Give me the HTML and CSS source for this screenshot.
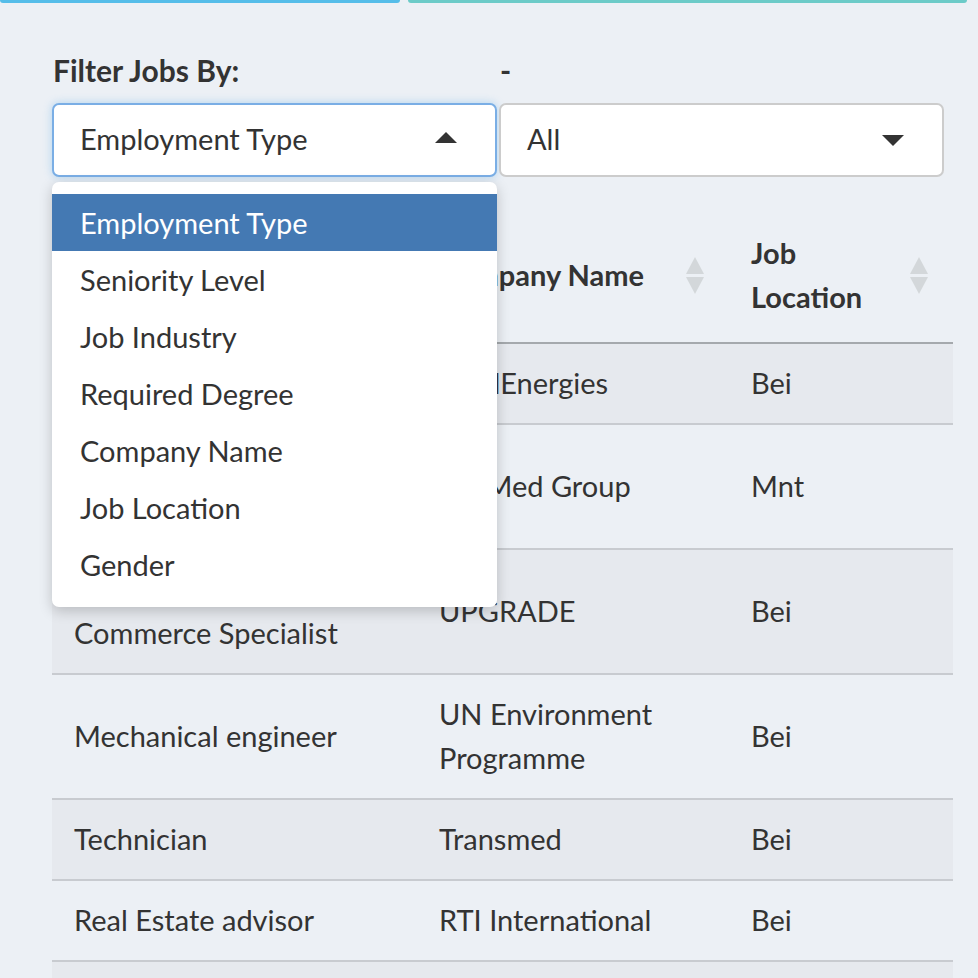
FILE: index.html
```html
<!DOCTYPE html>
<html lang="en">
<head>
<meta charset="utf-8">
<title>Filter Jobs</title>
<link rel="stylesheet" href="styles.css">
</head>
<body>
<div class="topbars">
  <div class="bar bar-blue"></div>
  <div class="bar bar-teal"></div>
</div>
<div class="content">
  <div class="filters">
    <div class="filter">
      <div class="label">Filter Jobs By:</div>
      <div class="select focused">
        <span class="value">Employment Type</span>
        <span class="caret caret-up"></span>
      </div>
      <div class="menu">
        <div class="option active">Employment Type</div>
        <div class="option">Seniority Level</div>
        <div class="option">Job Industry</div>
        <div class="option">Required Degree</div>
        <div class="option">Company Name</div>
        <div class="option">Job Location</div>
        <div class="option">Gender</div>
      </div>
    </div>
    <div class="filter">
      <div class="label">-</div>
      <div class="select">
        <span class="value">All</span>
        <span class="caret caret-down"></span>
      </div>
    </div>
  </div>

  <table class="jobs">
    <colgroup>
      <col class="c1"><col class="c2"><col class="c3">
    </colgroup>
    <thead>
      <tr>
        <th><div class="th"><span>Job Title</span><span class="sort"><i class="up"></i><i class="down"></i></span></div></th>
        <th><div class="th"><span>Company Name</span><span class="sort"><i class="up"></i><i class="down"></i></span></div></th>
        <th><div class="th"><span>Job Location</span><span class="sort"><i class="up"></i><i class="down"></i></span></div></th>
      </tr>
    </thead>
    <tbody>
      <tr class="odd"><td>Project Engineer</td><td>TotalEnergies</td><td>Bei</td></tr>
      <tr><td>Medical Sales Representative</td><td>LifeMed Group</td><td>Mnt</td></tr>
      <tr class="odd"><td>E-<br>Commerce Specialist</td><td>UPGRADE</td><td>Bei</td></tr>
      <tr><td>Mechanical engineer</td><td>UN Environment Programme</td><td>Bei</td></tr>
      <tr class="odd"><td>Technician</td><td>Transmed</td><td>Bei</td></tr>
      <tr><td>Real Estate advisor</td><td>RTI International</td><td>Bei</td></tr>
      <tr class="odd"><td>Accountant</td><td>Bank Audi</td><td>Bei</td></tr>
    </tbody>
  </table>
</div>
</body>
</html>
```
FILE: styles.css
```css
html, body {
  margin: 0;
  padding: 0;
  background: #ecf0f5;
  height: 978px;
  overflow: hidden;
}
body {
  font-family: Lato, "Open Sans", sans-serif;
  color: #333;
  font-size: 29px;
}
.topbars {
  display: flex;
  gap: 8px;
  padding-right: 11px;
}
.bar {
  height: 3px;
  border-radius: 0 0 3px 3px;
}
.bar-blue { width: 400px; background: #55bde9; }
.bar-teal { flex: 1; background: #6ccbc8; }

.content {
  padding: 0 25px 0 52px;
}
.filters {
  display: flex;
  gap: 2px;
  margin-top: 52px;
}
.filter {
  position: relative;
  width: 445px;
}
.label {
  font-weight: 700;
  font-size: 30px;
  line-height: 30px;
  height: 30px;
  margin-bottom: 18px;
  padding-left: 1px;
}
.select {
  box-sizing: border-box;
  height: 74px;
  background: #fff;
  border: 2px solid #ccc;
  border-radius: 7px;
  display: flex;
  align-items: center;
  justify-content: space-between;
  padding: 0 38px 3px 26px;
  font-size: 29px;
}
.select.focused {
  border-color: #7aaee5;
  box-shadow: 0 0 8px rgba(102, 175, 233, 0.45);
}
.caret {
  width: 0;
  height: 0;
  border-left: 11px solid transparent;
  border-right: 11px solid transparent;
}
.caret-up { border-bottom: 11px solid #333; margin-top: -2px; }
.caret-down { border-top: 11px solid #333; margin-top: 4px; }

.menu {
  position: absolute;
  top: 127px;
  left: 0;
  width: 445px;
  box-sizing: border-box;
  background: #fff;
  border-radius: 7px;
  box-shadow: 0 4px 14px rgba(0, 0, 0, 0.2);
  padding: 12px 0 14px;
  z-index: 10;
}
.option {
  height: 57px;
  line-height: 57px;
  padding-left: 28px;
  font-size: 29px;
}
.option.active {
  background: #4479b3;
  color: #fff;
}

.jobs {
  width: 901px;
  table-layout: fixed;
  border-collapse: collapse;
  margin-top: 41px;
  font-size: 29px;
}
.c1 { width: 365px; }
.c2 { width: 312px; }
.c3 { width: 224px; }
.jobs th {
  text-align: left;
  font-weight: 700;
  padding: 13px 25px 23px 22px;
  line-height: 44px;
  border-bottom: 2px solid #a5a9ad;
  vertical-align: middle;
}
.th {
  display: flex;
  align-items: center;
  justify-content: space-between;
  gap: 12px;
}
.sort {
  display: flex;
  flex-direction: column;
  gap: 3px;
  flex: none;
}
.sort i {
  width: 0;
  height: 0;
  border-left: 9px solid transparent;
  border-right: 9px solid transparent;
}
.sort .up { border-bottom: 17px solid #d3d7da; }
.sort .down { border-top: 17px solid #d3d7da; }
.jobs td {
  padding: 17px 22px 18px;
  line-height: 44px;
  border-top: 2px solid #c8cbd0;
  vertical-align: middle;
}
.jobs tbody tr:first-child td { border-top: 0; }
.jobs tr.odd td { background: #e6e9ee; }
```
